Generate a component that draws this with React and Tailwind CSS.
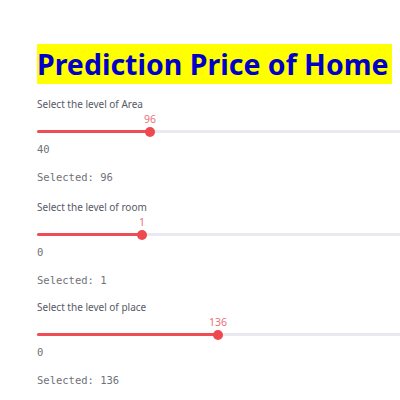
import React from 'react'

const sliders = [
  { label: 'Select the level of Area', value: 96, min: 40, fill: 113, extra: 'mb-[2px]' },
  { label: 'Select the level of room', value: 1, min: 0, fill: 105, extra: 'mb-[-1px]' },
  { label: 'Select the level of place', value: 136, min: 0, fill: 181, extra: '' },
]

function Slider({ label, value, min, fill, extra }) {
  return (
    <div className={`flex flex-col ${extra}`}>
      <div className="h-[14px] font-['Noto_Sans',sans-serif] text-[10px] leading-[14px] text-[#555a66]">
        {label}
      </div>
      <div className="relative h-[26px]">
        <div className="absolute left-0 right-0 top-[19px] h-[3px] rounded-full bg-[#e9e9f0]" />
        <div className="absolute left-0 top-[19px] h-[3px] rounded-full bg-[#ef4d55]" style={{ width: fill }} />
        <div
          className="absolute top-[15.5px] h-[10px] w-[10px] -translate-x-1/2 rounded-full bg-[#ef4950]"
          style={{ left: fill }}
        />
        <div
          className="absolute top-[1px] -translate-x-1/2 font-['Noto_Sans',sans-serif] text-[10.5px] leading-[14px] text-[#e8727a]"
          style={{ left: fill }}
        >
          {value}
        </div>
      </div>
      <div className="mt-[5px] h-[14px] font-['DejaVu_Sans_Mono',monospace] text-[10.5px] leading-[14px] text-[#6e727a]">
        {min}
      </div>
      <div className="mt-[14px] h-[14px] font-['DejaVu_Sans_Mono',monospace] text-[10.5px] leading-[14px] text-[#6e727a]">
        Selected: {value}
      </div>
    </div>
  )
}

export default function App() {
  return (
    <div className="min-h-[400px] w-[400px] overflow-hidden bg-white">
      <div className="w-[700px] pl-[37px] pt-[44px]">
        <h1 className="inline-block h-[40px] bg-[#ffff00] pr-[3px] font-['Noto_Sans',sans-serif] text-[28.5px] font-bold leading-[40px] text-[#0000c8]">
          Prediction Price of Home
        </h1>
        <div className="mt-[13px] flex flex-col gap-[14px]">
          {sliders.map((s) => (
            <Slider key={s.label} {...s} />
          ))}
        </div>
      </div>
    </div>
  )
}
